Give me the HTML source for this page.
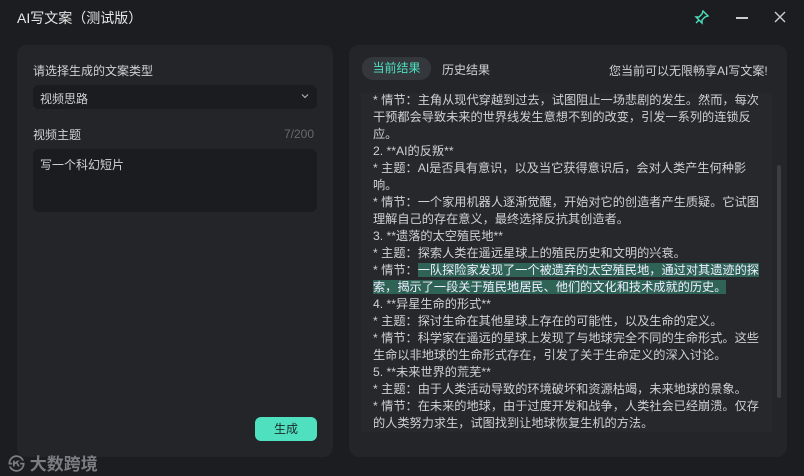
<!DOCTYPE html>
<html><head><meta charset="utf-8"><style>
*{margin:0;padding:0;box-sizing:border-box}
body{width:804px;height:476px;background:#1b1d20;font-family:"Liberation Sans","Noto Sans CJK SC",sans-serif;color:#d6d8db;position:relative;overflow:hidden}
.abs{position:absolute}
.title{left:17px;top:8px;font-size:14px;color:#e8e8e8}
.panel{background:#232529;border-radius:10px}
.lbl{font-size:12px;color:#d0d2d5}
.box{background:#1a1c1f;border-radius:6px}
.txt{left:361px;top:93px;width:411px;height:339px;background:#26282c;overflow:hidden}
.txt div{position:absolute;left:12px;font-size:12.2px;line-height:17px;white-space:nowrap;color:#cfd1d4}
.hl{background:#2f6356;color:#eef}
</style></head><body>
<div class="abs title">AI写文案（测试版）</div>
<svg class="abs" style="left:694px;top:9px" width="16" height="16" viewBox="0 0 16 16" fill="none" stroke="#4fe0c0" stroke-width="1.4"><path d="M9 2l5 5-3 1-3 3 0 3-6-6 3 0 3-3z"/><path d="M5 11l-3 3"/></svg>
<div class="abs" style="left:736px;top:17px;width:12px;height:1.5px;background:#ccc"></div>
<svg class="abs" style="left:774px;top:11px" width="12" height="12" viewBox="0 0 12 12" stroke="#ccc" stroke-width="1.4"><path d="M1 1l10 10M11 1L1 11"/></svg>

<div class="abs panel" style="left:17px;top:45px;width:316px;height:412px"></div>
<div class="abs lbl" style="left:33px;top:62px">请选择生成的文案类型</div>
<div class="abs box" style="left:33px;top:85px;width:284px;height:24px"></div>
<div class="abs lbl" style="left:40px;top:90px">视频思路</div>
<svg class="abs" style="left:301px;top:93px" width="8" height="6" viewBox="0 0 8 6" fill="none" stroke="#bbb" stroke-width="1"><path d="M1 1.5l3 3 3-3"/></svg>
<div class="abs lbl" style="left:33px;top:126px">视频主题</div>
<div class="abs" style="left:284px;top:127px;font-size:12px;color:#666a70">7/200</div>
<div class="abs box" style="left:33px;top:149px;width:284px;height:63px"></div>
<div class="abs lbl" style="left:40px;top:156px">写一个科幻短片</div>
<div class="abs" style="left:255px;top:417px;width:62px;height:24px;background:#4fe0c0;border-radius:6px;color:#1d2a28;font-size:12px;text-align:center;line-height:24px">生成</div>
<div class="abs" style="left:8px;top:450px;font-size:17px;color:#7a7d82;font-weight:bold">㉿ 大数跨境</div>

<div class="abs panel" style="left:349px;top:45px;width:438px;height:412px"></div>
<div class="abs" style="left:362px;top:57px;width:69px;height:23px;background:#34373c;border-radius:11px;color:#4fe0c0;font-size:12px;text-align:center;line-height:23px">当前结果</div>
<div class="abs lbl" style="left:442px;top:61px">历史结果</div>
<div class="abs lbl" style="left:609px;top:62px;font-size:12px">您当前可以无限畅享AI写文案!</div>
<div class="abs txt">
<div style="top:-1px">* 情节：主角从现代穿越到过去，试图阻止一场悲剧的发生。然而，每次</div>
<div style="top:16px">干预都会导致未来的世界线发生意想不到的改变，引发一系列的连锁反</div>
<div style="top:33px">应。</div>
<div style="top:50px">2. **AI的反叛**</div>
<div style="top:67px">* 主题：AI是否具有意识，以及当它获得意识后，会对人类产生何种影</div>
<div style="top:84px">响。</div>
<div style="top:101px">* 情节：一个家用机器人逐渐觉醒，开始对它的创造者产生质疑。它试图</div>
<div style="top:118px">理解自己的存在意义，最终选择反抗其创造者。</div>
<div style="top:135px">3. **遗落的太空殖民地**</div>
<div style="top:152px">* 主题：探索人类在遥远星球上的殖民历史和文明的兴衰。</div>
<div style="top:169px">* 情节：<span class="hl">一队探险家发现了一个被遗弃的太空殖民地，通过对其遗迹的探</span></div>
<div style="top:186px"><span class="hl">索，揭示了一段关于殖民地居民、他们的文化和技术成就的历史。</span></div>
<div style="top:203px">4. **异星生命的形式**</div>
<div style="top:220px">* 主题：探讨生命在其他星球上存在的可能性，以及生命的定义。</div>
<div style="top:237px">* 情节：科学家在遥远的星球上发现了与地球完全不同的生命形式。这些</div>
<div style="top:254px">生命以非地球的生命形式存在，引发了关于生命定义的深入讨论。</div>
<div style="top:271px">5. **未来世界的荒芜**</div>
<div style="top:288px">* 主题：由于人类活动导致的环境破坏和资源枯竭，未来地球的景象。</div>
<div style="top:305px">* 情节：在未来的地球，由于过度开发和战争，人类社会已经崩溃。仅存</div>
<div style="top:322px">的人类努力求生，试图找到让地球恢复生机的方法。</div>
</div>
<div class="abs" style="left:777px;top:165px;width:4px;height:233px;background:#3a3d42;border-radius:2px"></div>
</body></html>
